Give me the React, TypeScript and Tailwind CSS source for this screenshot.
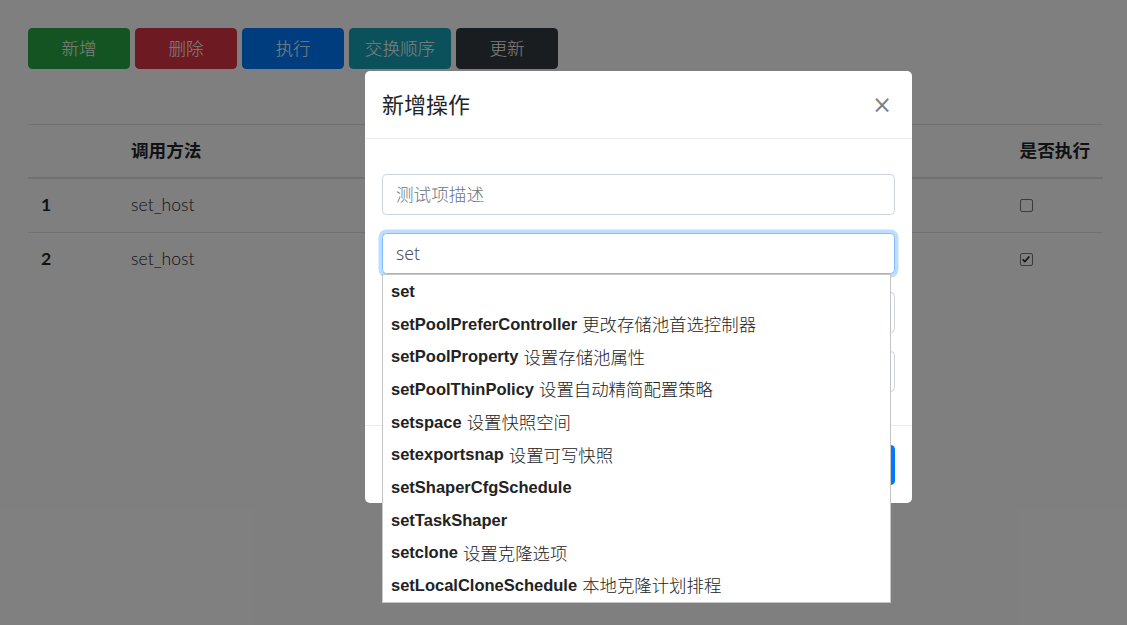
import React from 'react'

const cjk = "font-['Noto_Sans','Noto_Sans_CJK_SC',sans-serif]"

const toolbar = [
  { label: '新增', cls: 'bg-[#28a745]' },
  { label: '删除', cls: 'bg-[#dc3545]' },
  { label: '执行', cls: 'bg-[#007bff]' },
  { label: '交换顺序', cls: 'bg-[#17a2b8]' },
  { label: '更新', cls: 'bg-[#343a40]' },
]

const rows = [
  { id: 1, method: 'set_host', run: false },
  { id: 2, method: 'set_host', run: true },
]

const suggestions: Array<{ name: string; desc?: string }> = [
  { name: 'set' },
  { name: 'setPoolPreferController', desc: '更改存储池首选控制器' },
  { name: 'setPoolProperty', desc: '设置存储池属性' },
  { name: 'setPoolThinPolicy', desc: '设置自动精简配置策略' },
  { name: 'setspace', desc: '设置快照空间' },
  { name: 'setexportsnap', desc: '设置可写快照' },
  { name: 'setShaperCfgSchedule' },
  { name: 'setTaskShaper' },
  { name: 'setclone', desc: '设置克隆选项' },
  { name: 'setLocalCloneSchedule', desc: '本地克隆计划排程' },
]

function Toolbar() {
  return (
    <div className="flex gap-[5px]">
      {toolbar.map((b) => (
        <button
          key={b.label}
          className={`${b.cls} w-[102px] h-[41px] rounded-[4.4px] text-white text-[17.6px] leading-none font-light`}
        >
          {b.label}
        </button>
      ))}
    </div>
  )
}

function Check({ on }: { on: boolean }) {
  return (
    <span className="flex w-[13px] h-[13px] mt-[7px] rounded-[2px] border border-[#767676] bg-white items-center justify-center">
      {on && (
        <svg viewBox="0 0 12 12" className="w-[10px] h-[10px]">
          <path d="M2 6.5 L4.6 9 L10 3" fill="none" stroke="#222" strokeWidth="2" />
        </svg>
      )}
    </span>
  )
}

function OpsTable() {
  const th = 'px-[13px] py-[13px] text-left text-[17.6px] leading-[26.4px] font-bold border-b-2 border-[#dee2e6] whitespace-nowrap'
  return (
    <table className="w-full mt-[55px] border-collapse text-[#212529] font-['Lato','Noto_Sans_CJK_SC',sans-serif]">
      <thead>
        <tr className="border-t border-[#dee2e6]">
          <th className={`w-[90px] ${th}`}></th>
          <th className={th}>调用方法</th>
          <th className={`w-[84px] ${th}`}>是否执行</th>
        </tr>
      </thead>
      <tbody>
        {rows.map((r) => (
          <tr key={r.id} className="border-t border-[#dee2e6] first:border-t-0">
            <td className="px-[13px] py-[13px] text-[17.6px] leading-[26.4px] font-bold">{r.id}</td>
            <td className="px-[13px] py-[13px] text-[17.6px] leading-[26.4px] font-light">{r.method}</td>
            <td className="px-[13px] py-[13px] h-[53px] align-top">
              <Check on={r.run} />
            </td>
          </tr>
        ))}
      </tbody>
    </table>
  )
}

function Field({ placeholder, value, focused }: { placeholder?: string; value?: string; focused?: boolean }) {
  return (
    <div
      className={`h-[41px] rounded-[4.4px] border bg-white px-[13px] flex items-center text-[17.6px] font-light ${
        focused
          ? 'border-[#80bdff] shadow-[0_0_0_3.5px_rgba(0,123,255,0.25)] text-[#495057]'
          : 'border-[#ced4da] text-[#6c757d]'
      }`}
    >
      {value ?? placeholder}
    </div>
  )
}

function Suggest() {
  return (
    <ul className="absolute left-0 top-[41px] w-[509px] bg-white border border-[#c5c5c5] font-['Liberation_Sans','Noto_Sans_CJK_SC',sans-serif] text-[#222]">
      {suggestions.map((s) => (
        <li key={s.name} className="h-[32.7px] pl-[8px] flex items-center whitespace-nowrap">
          <span className="font-bold text-[16.5px]">{s.name}</span>
          {s.desc && <span className="ml-[5px] text-[17.4px] font-['Noto_Sans_CJK_SC',sans-serif] font-light">{s.desc}</span>}
        </li>
      ))}
    </ul>
  )
}

function Modal() {
  return (
    <div className="absolute left-[365px] top-[71px] w-[547px] bg-white rounded-[5px] text-[#212529]">
      <div className="h-[68px] px-[17px] flex items-center justify-between border-b border-[#e9ecef]">
        <h5 className="text-[22px] font-normal">新增操作</h5>
        <span className="text-[24px] font-normal text-black/50 font-['DejaVu_Sans',sans-serif] leading-none mr-[3px]">×</span>
      </div>
      <div className="px-[17px] pt-[35px] pb-[33px] flex flex-col gap-[18px]">
        <Field placeholder="测试项描述" />
        <div className="relative">
          <Field value="set" focused />
          <Suggest />
        </div>
        <Field />
        <Field />
      </div>
      <div className="border-t border-[#e9ecef] px-[17px] pt-[19px] pb-[18px] flex justify-end gap-[4px]">
        <button className="h-[40px] w-[76px] rounded-[4.4px] bg-[#6c757d]"></button>
        <button className="h-[40px] w-[76px] rounded-[4.4px] bg-[#007bff]"></button>
      </div>
    </div>
  )
}

export default function App() {
  return (
    <div className={`relative w-[1127px] h-[625px] overflow-hidden bg-white ${cjk}`}>
      <div className="pl-[28px] pr-[24px] pt-[28px]">
        <Toolbar />
        <OpsTable />
      </div>
      <div className="absolute inset-0 bg-black/50" />
      <Modal />
    </div>
  )
}
